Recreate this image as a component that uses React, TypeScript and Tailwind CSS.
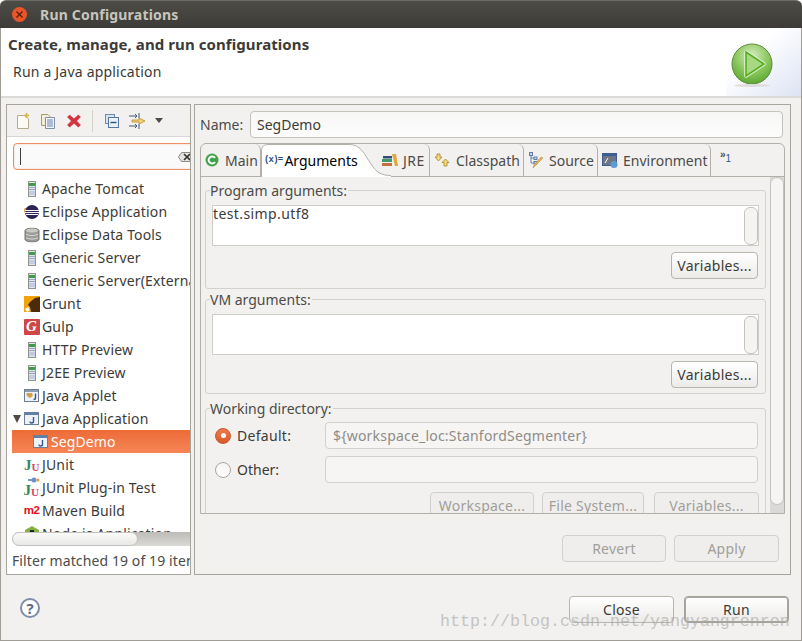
import React from "react";

const Server = () => (
  <svg width="16" height="16" viewBox="0 0 16 16">
    <rect x="4.5" y="0.5" width="7" height="15" fill="#dfe5ea" stroke="#8d9488" />
    <rect x="5" y="2" width="6" height="3" fill="#3f9a4c" />
    <rect x="5" y="6" width="6" height="1" fill="#9aa3c0" />
    <rect x="5" y="8" width="6" height="1" fill="#9aa3c0" />
    <rect x="5" y="10" width="6" height="4" fill="#c5cbe2" />
  </svg>
);
const EclipseIcon = () => (
  <svg width="16" height="16" viewBox="0 0 16 16">
    <circle cx="8" cy="8" r="7" fill="#2c2255" />
    <path d="M1.5 4 A7 7 0 0 0 1 8" stroke="#e98a2b" strokeWidth="1.5" fill="none" />
    <rect x="1" y="6" width="14" height="1" fill="#fff" />
    <rect x="1" y="8" width="14" height="1" fill="#fff" />
    <rect x="2" y="10" width="12" height="1" fill="#fff" />
  </svg>
);
const DataTools = () => (
  <svg width="16" height="16" viewBox="0 0 16 16">
    <path d="M1 3.5 C1 0.5 15 0.5 15 3.5 V12.5 C15 15.5 1 15.5 1 12.5 Z" fill="#9a9a98" stroke="#77776f" />
    <ellipse cx="8" cy="3.5" rx="6" ry="2" fill="#c9c9c5" />
    <path d="M2 7 C4 9 12 9 14 7 M2 10.5 C4 12.5 12 12.5 14 10.5" stroke="#dcdcd8" fill="none" />
  </svg>
);
const Grunt = () => (
  <svg width="16" height="16" viewBox="0 0 16 16">
    <rect width="16" height="16" fill="#f0a30a" />
    <path d="M16 1 L11 2 L6 6 L4 9 L6 11 L7 16 L16 16 Z" fill="#4a2c0c" />
    <path d="M1 13 L4 11 L6 14 L3 16 Z" fill="#fff" />
  </svg>
);
const Gulp = () => (
  <span className="flex h-4 w-4 items-center justify-center rounded-[1px] bg-[#cf4646] font-['Liberation_Serif',serif] text-[15px] leading-none font-bold tracking-normal text-white italic">
    G
  </span>
);
const JavaWin = () => (
  <svg width="16" height="14" viewBox="0 0 16 14">
    <rect x="0.5" y="0.5" width="14" height="12" fill="#eef3fa" stroke="#6d7f97" />
    <rect x="1" y="1" width="13" height="2" fill="#5b7fb0" />
    <path d="M9.5 5 V9.5 Q9.5 11 7.5 11 Q6 11 6 9.5" stroke="#35598d" strokeWidth="1.4" fill="none" />
  </svg>
);
const Applet = () => (
  <svg width="16" height="14" viewBox="0 0 16 14">
    <rect x="0.5" y="0.5" width="14" height="12" fill="#eef3fa" stroke="#6d7f97" />
    <rect x="1" y="1" width="13" height="2" fill="#8d9cb2" />
    <path d="M2.5 4 H8 L9 6.5 L6.5 9 L4 8 L2.5 6 Z" fill="#d2a04d" />
    <path d="M11.5 4.5 V9 Q11.5 10.5 9.5 10.5" stroke="#35598d" strokeWidth="1.4" fill="none" />
  </svg>
);
const JU = () => (
  <span className="flex h-4 w-[15px] items-end font-['Liberation_Serif',serif] leading-none font-bold tracking-normal">
    <span className="text-[15px] text-[#2f8b57]">J</span>
    <span className="text-[11px] text-[#d9455f]">U</span>
  </span>
);
const JUPlug = () => (
  <span className="flex h-5 w-4 flex-col items-start justify-end">
    <svg width="16" height="6" viewBox="0 0 16 6" className="shrink-0">
      <path d="M4 3 H9" stroke="#7a93c2" strokeWidth="2" />
      <circle cx="10" cy="3" r="2.5" fill="#6f8fc9" />
      <circle cx="14" cy="3" r="1.5" fill="#e0a030" />
    </svg>
    <JU />
  </span>
);
const M2 = () => (
  <span className="font-['Liberation_Sans',sans-serif] text-[11.5px] leading-none font-bold tracking-[-0.5px] text-[#e3101c]">
    m2
  </span>
);
const Node = () => (
  <svg width="16" height="16" viewBox="0 0 16 16">
    <path d="M8 0 L15 4 V12 L8 16 L1 12 V4 Z" fill="#84b140" />
    <rect x="6" y="4" width="4" height="7" fill="#222" />
  </svg>
);

const TreeRow = ({ icon, label }: { icon: React.ReactNode; label: string }) => (
  <div className="flex h-[23px] shrink-0 items-center whitespace-nowrap pl-[9px] tracking-[0.15px] text-[#3c3b37]">
    <span className="flex w-[21px] shrink-0 justify-center">{icon}</span>
    <span>{label}</span>
  </div>
);

const IconNew = () => (
  <svg width="16" height="16" viewBox="0 0 16 16">
    <path d="M1.5 2.5 H9 L12.5 6 V15.5 H1.5 Z" fill="#fbfaf3" stroke="#b3ad90" />
    <path d="M10.5 0 V5 M8 2.5 H13" stroke="#d8b24a" strokeWidth="1.6" />
  </svg>
);
const IconCopy = () => (
  <svg width="16" height="16" viewBox="0 0 16 16">
    <path d="M1.5 1.5 H8 L10 3.5 V12.5 H1.5 Z" fill="#f3ecd6" stroke="#a89b73" />
    <path d="M5.5 4.5 H14.5 V15.5 H5.5 Z" fill="#f4f6fb" stroke="#7f8fa8" />
    <path d="M7 7 H13 M7 9 H13 M7 11 H13 M7 13 H13" stroke="#6d82a8" />
  </svg>
);
const IconDelete = () => (
  <svg width="14" height="14" viewBox="0 0 16 16">
    <path d="M3 1 L8 5.5 L13 1 L15.5 3.5 L11 8 L15.5 12.5 L13 15 L8 10.5 L3 15 L0.5 12.5 L5 8 L0.5 3.5 Z" fill="#d8303c" stroke="#b8313a" strokeWidth="0.5" />
  </svg>
);
const IconCollapse = () => (
  <svg width="14" height="14" viewBox="0 0 14 14">
    <rect x="0.5" y="0.5" width="9" height="9" fill="#d7e3f2" stroke="#6f8bb0" />
    <rect x="3.5" y="3.5" width="10" height="10" fill="#eaf0f8" stroke="#56779f" />
    <path d="M5.5 8.5 H11.5" stroke="#2f4d78" strokeWidth="1.4" />
  </svg>
);
const IconFilter = () => (
  <svg width="17" height="16" viewBox="0 0 17 16">
    <path d="M0 3 H8 M6 1 L8 3 L6 5 M0 13 H8 M6 11 L8 13 L6 15 M10 0 V5 M10 11 V16" stroke="#44587a" fill="none" />
    <path d="M3 7 H10 V5 L16 8 L10 11 V9 H3 Z" fill="#f3d27a" stroke="#b98e2a" strokeWidth="0.8" />
  </svg>
);

const Btn = ({ label, w, disabled, def }: { label: string; w: string; disabled?: boolean; def?: boolean }) => (
  <div
    className={`flex h-[27px] shrink-0 items-center justify-center ${w} rounded-[4px] border tracking-[0.25px] ${
      disabled
        ? "border-[#d2d0cc] bg-[#efeeed] text-[#a19e99]"
        : def
          ? "border-[#a5a29b] bg-gradient-to-b from-white to-[#ecebe9] text-[#3c3b37] shadow-[inset_0_0_0_1px_#a9a69f]"
          : "border-[#b8b5ae] bg-gradient-to-b from-white to-[#ecebe9] text-[#3c3b37]"
    }`}
  >
    {label}
  </div>
);

const Group = ({ title, children, className }: { title: string; children: React.ReactNode; className?: string }) => (
  <div className={`rounded-[3px] border border-[#d3d1cc] ${className ?? ""}`}>
    <div className="-mt-[10px] flex h-[19px]">
      <span className="ml-[4px] bg-[#f2f1f0] pr-[1px] leading-[19px] text-[#4c4b47]">{title}</span>
    </div>
    {children}
  </div>
);

const TextArea = ({ text }: { text?: string }) => (
  <div className="mt-[5px] mr-[6px] ml-[6px] flex h-[41px] items-start justify-between border border-[#cfcdc8] bg-white leading-[16px] tracking-[0.4px] text-[#3c3b37]">
    <span>{text}</span>
    <span className="mt-[1px] h-[38px] w-[14px] rounded-[6px] border border-[#c4c2bd] bg-[#f5f4f3]" />
  </div>
);

const Tab = ({ w, icon, label, gap }: { w: string; icon: React.ReactNode; label: string; gap: string }) => (
  <div className={`flex ${w} shrink-0 items-center ${gap} rounded-tr-[6px] border-r border-[#b3b0aa] pl-[4px] text-[#4c4b47]`}>
    {icon}
    <span>{label}</span>
  </div>
);

export default function App() {
  return (
    <div className="relative flex h-[641px] w-[802px] flex-col overflow-hidden bg-white font-['Noto_Sans',sans-serif] text-[14px]">
      {/* title */}
      <div className="flex h-[28px] shrink-0 items-center rounded-t-[6px] border-t border-[#6c6b65] bg-gradient-to-b from-[#4d4c46] to-[#3c3b37] pb-[1px] pl-[12px]">
        <span className="flex h-[15px] w-[15px] items-center justify-center rounded-full bg-[#e9552a]">
          <svg width="7" height="7" viewBox="0 0 7 7">
            <path d="M0.5 0.5 L6.5 6.5 M6.5 0.5 L0.5 6.5" stroke="#53200f" strokeWidth="1.3" />
          </svg>
        </span>
        <span className="ml-[13px] text-[14px] font-bold tracking-[0.2px] text-[#c7c5bd]">Run Configurations</span>
      </div>

      <div className="flex min-h-0 flex-1 flex-col border-x border-b border-[#a09d97] bg-[#f2f1f0]">
        {/* header */}
        <div className="flex h-[70px] shrink-0 justify-between border-b-2 border-[#dcdad6] bg-white">
          <div className="pl-[7px]">
            <div className="mt-[6px] text-[15px] leading-[20px] font-bold tracking-[0.08px] text-[#3c3b37]">Create, manage, and run configurations</div>
            <div className="mt-[8px] pl-[5px] leading-[20px] tracking-[0.2px] text-[#3c3b37]">Run a Java application</div>
          </div>
          <div className="flex h-[68px] w-[75px] items-start justify-start bg-gradient-to-br from-white from-35% to-[#dde3f4] pt-[15px] pl-[5px]">
            <svg width="42" height="44" viewBox="0 0 42 44">
              <defs>
                <radialGradient id="gb" cx="50%" cy="30%" r="80%">
                  <stop offset="0" stopColor="#d5ecc0" />
                  <stop offset="0.55" stopColor="#86c458" />
                  <stop offset="1" stopColor="#4a9e24" />
                </radialGradient>
              </defs>
              <circle cx="21" cy="21" r="20" fill="url(#gb)" stroke="#5f8a3c" />
              <path d="M15 9 L33 21 L15 33 Z" fill="none" stroke="#e6f5d8" strokeWidth="3.5" strokeLinejoin="round" />
              <path d="M15 9 L33 21 L15 33 Z" fill="#a9d884" stroke="#55ae22" strokeWidth="1.6" />
              <ellipse cx="21" cy="42.5" rx="18" ry="1.5" fill="#dcdcdc" />
            </svg>
          </div>
        </div>

        {/* body */}
        <div className="mt-[6px] flex h-[471px] shrink-0 gap-[3px] pl-[5px]">
          {/* left panel */}
          <div className="flex w-[185px] shrink-0 flex-col overflow-hidden border border-[#a8a59f] bg-white">
            <div className="flex h-[32px] shrink-0 items-center border-b border-[#d9d7d3] bg-[#f2f1f0] pl-[9px]">
              <span className="flex w-[24px]"><IconNew /></span>
              <span className="flex w-[27px]"><IconCopy /></span>
              <span className="flex w-[25px]"><IconDelete /></span>
              <span className="mr-[12px] h-[22px] w-px bg-[#d3d1cc]" />
              <span className="flex w-[24px]"><IconCollapse /></span>
              <span className="flex w-[25px]"><IconFilter /></span>
              <span className="ml-[1px] h-0 w-0 border-x-[4px] border-t-[5px] border-x-transparent border-t-[#4c4b47]" />
            </div>
            <div className="mt-[6px] ml-[6px] flex h-[27px] w-[190px] shrink-0 items-center rounded-[4px] border border-[#ee8f6c] bg-[#fafafa] pl-[6px] shadow-[inset_0_0_2px_#f3c4b1]">
              <span className="h-[17px] w-px bg-[#3c3b37]" />
              <svg width="16" height="10" viewBox="0 0 16 10" className="ml-[157px] shrink-0">
                <path d="M3.5 0.5 H15.5 V9.5 H3.5 L0.5 5 Z" fill="#e4e3e0" stroke="#8e8c87" />
                <path d="M6 2 L12 8 M12 2 L6 8" stroke="#33322e" strokeWidth="1.6" />
              </svg>
            </div>
            <div className="mt-[7px] flex h-[355px] shrink-0 flex-col overflow-hidden pl-[5px]">
              <TreeRow icon={<Server />} label="Apache Tomcat" />
              <TreeRow icon={<EclipseIcon />} label="Eclipse Application" />
              <TreeRow icon={<DataTools />} label="Eclipse Data Tools" />
              <TreeRow icon={<Server />} label="Generic Server" />
              <TreeRow icon={<Server />} label="Generic Server(External Launch)" />
              <TreeRow icon={<Grunt />} label="Grunt" />
              <TreeRow icon={<Gulp />} label="Gulp" />
              <TreeRow icon={<Server />} label="HTTP Preview" />
              <TreeRow icon={<Server />} label="J2EE Preview" />
              <TreeRow icon={<Applet />} label="Java Applet" />
              <div className="flex h-[23px] shrink-0 items-center whitespace-nowrap tracking-[0.15px] text-[#3c3b37]">
                <span className="ml-[1px] h-0 w-0 border-x-[4px] border-t-[8px] border-x-transparent border-t-[#4c4b47]" />
                <span className="ml-[1px] flex w-[20px] justify-center"><JavaWin /></span>
                <span>Java Application</span>
              </div>
              <div className="flex h-[23px] shrink-0 items-center whitespace-nowrap bg-gradient-to-b from-[#ec6b37] to-[#f68556] pl-[21px] tracking-[0.1px] text-white">
                <span className="w-[18px]"><JavaWin /></span>
                <span>SegDemo</span>
              </div>
              <TreeRow icon={<JU />} label="JUnit" />
              <TreeRow icon={<JUPlug />} label="JUnit Plug-in Test" />
              <TreeRow icon={<M2 />} label="Maven Build" />
              <TreeRow icon={<Node />} label="Node.js Application" />
            </div>
            <div className="ml-[5px] flex h-[14px] shrink-0 overflow-hidden rounded-l-[7px] bg-gradient-to-b from-[#bdbcb8] to-[#dad9d6]">
              <span className="h-[14px] w-[126px] rounded-[7px] border border-[#c3c2be] bg-gradient-to-b from-[#fbfbfa] to-[#e9e8e6]" />
            </div>
            <div className="flex h-[29px] shrink-0 items-center whitespace-nowrap pl-[5px] tracking-[0.1px] text-[#4c4b47]">Filter matched 19 of 19 items</div>
          </div>

          {/* right panel */}
          <div className="flex w-[597px] shrink-0 flex-col border border-[#a8a59f]">
            <div className="mt-[6px] flex h-[27px] shrink-0 items-center pl-[5px]">
              <span className="w-[50px] text-[#4c4b47]">Name:</span>
              <div className="flex h-[27px] w-[533px] items-center rounded-[4px] border border-[#c4c2bd] bg-gradient-to-b from-[#f7f7f6] to-[#fcfcfc] pl-[6px] text-[#3c3b37]">SegDemo</div>
            </div>

            {/* tab folder */}
            <div className="mt-[5px] ml-[5px] flex h-[371px] w-[585px] shrink-0 flex-col overflow-hidden rounded-t-[6px] border border-[#b3b0aa]">
              <div className="relative z-10 flex h-[32px] shrink-0">
                <Tab
                  w="w-[60px]"
                  gap="gap-[6px]"
                  label="Main"
                  icon={
                    <svg width="14" height="14" viewBox="0 0 14 14" className="shrink-0">
                      <circle cx="7" cy="7" r="6.5" fill="#3fa34a" />
                      <path d="M10 5 A3.5 3.5 0 1 0 10 9" stroke="#fff" strokeWidth="2" fill="none" />
                    </svg>
                  }
                />
                <div className="relative flex h-[33px] w-[130px] shrink-0 items-center gap-[2px] pl-[3px] text-black">
                  <svg width="130" height="33" viewBox="0 0 130 33" className="absolute inset-0">
                    <path d="M0 33 V7 Q0 0 7 0 H88 C100 0 103 10 110 20 C115 28 120 32 130 32 V33 Z" fill="#fff" />
                    <path d="M0.5 33 V7 Q0.5 0.5 7 0.5 H88 C100 0.5 103 10 110 20 C115 28 120 31.5 130 31.5" stroke="#b3b0aa" fill="none" />
                  </svg>
                  <span className="relative font-['Liberation_Mono',monospace] text-[9px] font-bold tracking-[-0.8px] text-[#2f4d78]">(x)=</span>
                  <span className="relative">Arguments</span>
                </div>
                <div className="relative -ml-[11px] flex w-[50px] shrink-0 items-center gap-[5px] rounded-tr-[6px] border-r border-[#b3b0aa] pl-[2px] tracking-[0.5px] text-[#4c4b47]">
                  <svg width="16" height="12" viewBox="0 0 16 12" className="shrink-0">
                    <rect x="0" y="9" width="10" height="3" fill="#c1713c" />
                    <rect x="0" y="5" width="10" height="3" fill="#3f9a6c" />
                    <rect x="1" y="2" width="9" height="2.5" fill="#2f4d78" />
                    <path d="M10 0 L14 0 L16 12 L13 12 Z" fill="#e1a83a" />
                  </svg>
                  <span>JRE</span>
                </div>
                <Tab
                  w="w-[94px]"
                  gap="gap-[6px]"
                  label="Classpath"
                  icon={
                    <svg width="16" height="14" viewBox="0 0 16 14" className="shrink-0">
                      <path d="M3 1 H6 V4 H8 L4.5 8 L1 4 H3 Z" fill="#f4d77c" stroke="#a88727" strokeWidth="0.8" />
                      <path d="M10 13 H13 V9.5 H15 L11.5 6 L8 9.5 H10 Z" fill="#f4d77c" stroke="#a88727" strokeWidth="0.8" />
                    </svg>
                  }
                />
                <Tab
                  w="w-[74px]"
                  gap="gap-[5px]"
                  label="Source"
                  icon={
                    <svg width="16" height="16" viewBox="0 0 16 16" className="shrink-0">
                      <path d="M3 2 V11 H7 M3 6 H7" stroke="#6d82a8" fill="none" />
                      <rect x="1.5" y="0.5" width="3" height="3" fill="#c9d6ea" stroke="#5d7fb0" />
                      <rect x="6" y="5" width="3" height="2.5" fill="#c9d6ea" stroke="#5d7fb0" />
                      <rect x="6" y="9.5" width="3" height="2.5" fill="#c9d6ea" stroke="#5d7fb0" />
                      <path d="M15 6 L7 14 L5 16 L6 13 L13 5 Z" fill="#e8b35a" stroke="#b9842c" strokeWidth="0.5" />
                    </svg>
                  }
                />
                <Tab
                  w="w-[113px]"
                  gap="gap-[5px]"
                  label="Environment"
                  icon={
                    <svg width="16" height="15" viewBox="0 0 16 15" className="shrink-0">
                      <rect width="15" height="13" fill="#3c5f8f" />
                      <rect x="1" y="3" width="13" height="9" fill="#6f7683" />
                      <path d="M3 10 L6 5" stroke="#fff" />
                      <circle cx="12" cy="11.5" r="3.5" fill="#5d9ad6" />
                    </svg>
                  }
                />
                <div className="flex flex-1 items-start pt-[6px] pl-[9px] font-['Liberation_Sans',sans-serif] text-[10px] leading-none font-bold text-[#4c4b47]">
                  »<span className="mt-[4px] font-normal text-[#35598d]">1</span>
                </div>
              </div>

              {/* content */}
              <div className="flex min-h-0 flex-1 overflow-hidden border-t border-[#b3b0aa]">
                <div className="w-[569px] shrink-0 pt-[13px] pl-[4px]">
                  <Group title="Program arguments:" className="h-[99px] w-[561px]">
                    <TextArea text="test.simp.utf8" />
                    <div className="mt-[6px] flex justify-end pr-[7px]">
                      <Btn label="Variables..." w="w-[87px]" />
                    </div>
                  </Group>
                  <Group title="VM arguments:" className="mt-[10px] h-[95px] w-[561px]">
                    <TextArea />
                    <div className="mt-[6px] flex justify-end pr-[7px]">
                      <Btn label="Variables..." w="w-[87px]" />
                    </div>
                  </Group>
                  <Group title="Working directory:" className="mt-[14px] h-[130px] w-[561px]">
                    <div className="mt-[4px] flex h-[27px] items-center">
                      <span className="ml-[9px] flex h-[16px] w-[16px] items-center justify-center rounded-full border border-[#c9562a] bg-gradient-to-b from-[#ee7a4a] to-[#d9592b]">
                        <span className="h-[5px] w-[5px] rounded-full bg-white" />
                      </span>
                      <span className="ml-[6px] w-[88px] tracking-[0.3px] text-[#3c3b37]">Default:</span>
                      <div className="flex h-[27px] w-[433px] items-center rounded-[4px] border border-[#d2d0cc] bg-[#f6f5f4] pl-[7px] tracking-[0.2px] text-[#8e8c87]">{"${workspace_loc:StanfordSegmenter}"}</div>
                    </div>
                    <div className="mt-[7px] flex h-[27px] items-center">
                      <span className="ml-[9px] h-[16px] w-[16px] rounded-full border border-[#a9a69f] bg-gradient-to-b from-[#f5f5f4] to-white" />
                      <span className="ml-[6px] w-[88px] text-[#3c3b37]">Other:</span>
                      <div className="h-[27px] w-[433px] rounded-[4px] border border-[#d2d0cc] bg-[#f6f5f4]" />
                    </div>
                    <div className="mt-[9px] flex justify-end pr-[6px]">
                      <Btn label="Workspace..." w="w-[104px]" disabled />
                      <span className="w-[8px]" />
                      <Btn label="File System..." w="w-[102px]" disabled />
                      <span className="w-[10px]" />
                      <Btn label="Variables..." w="w-[105px]" disabled />
                    </div>
                  </Group>
                </div>
                <div className="flex w-[14px] shrink-0 flex-col bg-[#dad9d7]">
                  <span className="h-[328px] w-[14px] rounded-[7px] border border-[#c4c2bd] bg-[#f6f5f4]" />
                </div>
              </div>
            </div>

            <div className="mt-[21px] flex justify-end gap-[8px] pr-[11px]">
              <Btn label="Revert" w="w-[104px]" disabled />
              <Btn label="Apply" w="w-[105px]" disabled />
            </div>
          </div>
        </div>

        {/* footer */}
        <div className="flex flex-1 items-start justify-between pt-[21px] pr-[12px] pl-[19px]">
          <span className="mt-[2px] flex h-[20px] w-[20px] items-center justify-center rounded-full border-2 border-[#7d8ea8] bg-white text-[15px] leading-none font-bold text-[#5a6b85]">?</span>
          <div className="flex gap-[10px]">
            <Btn label="Close" w="w-[105px]" />
            <Btn label="Run" w="w-[105px]" def />
          </div>
        </div>
      </div>

      {/* watermark */}
      <span className="absolute top-[612px] left-[440px] font-['Liberation_Mono',monospace] text-[16.67px] leading-[20px] whitespace-nowrap text-[#a8a6a2] opacity-60">
        http://blog.csdn.net/yangyangrenren
      </span>
    </div>
  );
}
